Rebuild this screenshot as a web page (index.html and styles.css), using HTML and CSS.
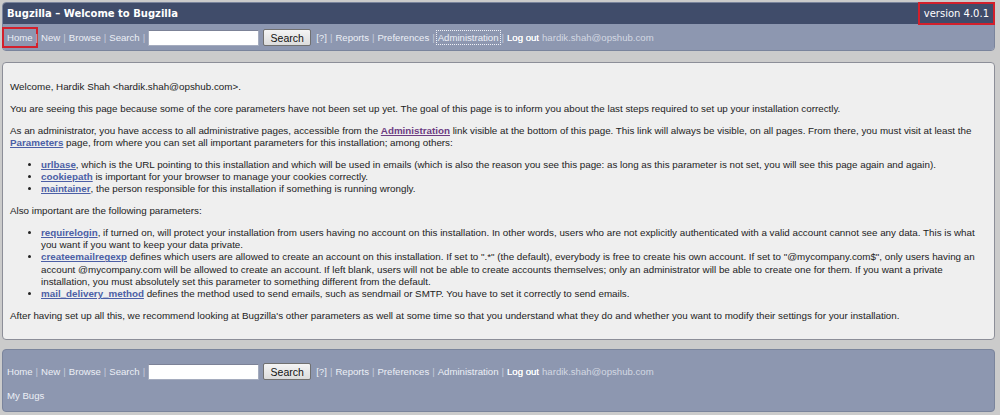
FILE: index.html
```html
<!DOCTYPE html>
<html>
<head>
<meta charset="utf-8">
<title>Bugzilla – Welcome to Bugzilla</title>
<link rel="stylesheet" href="styles.css">
</head>
<body>
<div class="header">
  <div class="titlebar">
    <span class="title">Bugzilla – Welcome to Bugzilla</span>
    <span class="version">version 4.0.1</span>
  </div>
  <div class="navbar">
    <ul class="links">
      <li><a class="lnk marked" href="#">Home</a></li>
      <li class="sep">|</li>
      <li><a class="lnk" href="#">New</a></li>
      <li class="sep">|</li>
      <li><a class="lnk" href="#">Browse</a></li>
      <li class="sep">|</li>
      <li><a class="lnk" href="#">Search</a></li>
      <li class="sep">|</li>
      <li class="form"><input class="quick" type="text"><button class="btn">Search</button></li>
      <li><a class="lnk" href="#">[?]</a></li>
      <li class="sep">|</li>
      <li><a class="lnk" href="#">Reports</a></li>
      <li class="sep">|</li>
      <li><a class="lnk" href="#">Preferences</a></li>
      <li class="sep">|</li>
      <li><a class="lnk focus" href="#">Administration</a></li>
      <li class="sep">|</li>
      <li><a class="lnk logout" href="#">Log out</a></li>
      <li class="email">hardik.shah@opshub.com</li>
    </ul>
  </div>
</div>

<div class="content">
  <p>Welcome, Hardik Shah &lt;hardik.shah@opshub.com&gt;.</p>
  <p>You are seeing this page because some of the core parameters have not been set up yet. The goal of this page is to inform you about the last steps required to set up your installation correctly.</p>
  <p>As an administrator, you have access to all administrative pages, accessible from the <a class="plink visited" href="#">Administration</a> link visible at the bottom of this page. This link will always be visible, on all pages. From there, you must visit at least the <a class="plink" href="#">Parameters</a> page, from where you can set all important parameters for this installation; among others:</p>
  <ul class="params">
    <li><a class="plink" href="#">urlbase</a>, which is the URL pointing to this installation and which will be used in emails (which is also the reason you see this page: as long as this parameter is not set, you will see this page again and again).</li>
    <li><a class="plink" href="#">cookiepath</a> is important for your browser to manage your cookies correctly.</li>
    <li><a class="plink" href="#">maintainer</a>, the person responsible for this installation if something is running wrongly.</li>
  </ul>
  <p>Also important are the following parameters:</p>
  <ul class="params">
    <li><a class="plink" href="#">requirelogin</a>, if turned on, will protect your installation from users having no account on this installation. In other words, users who are not explicitly authenticated with a valid account cannot see any data. This is what you want if you want to keep your data private.</li>
    <li><a class="plink" href="#">createemailregexp</a> defines which users are allowed to create an account on this installation. If set to ".*" (the default), everybody is free to create his own account. If set to "@mycompany.com$", only users having an account @mycompany.com will be allowed to create an account. If left blank, users will not be able to create accounts themselves; only an administrator will be able to create one for them. If you want a private installation, you must absolutely set this parameter to something different from the default.</li>
    <li><a class="plink" href="#">mail_delivery_method</a> defines the method used to send emails, such as sendmail or SMTP. You have to set it correctly to send emails.</li>
  </ul>
  <p>After having set up all this, we recommend looking at Bugzilla's other parameters as well at some time so that you understand what they do and whether you want to modify their settings for your installation.</p>
</div>

<div class="footer">
  <ul class="links">
    <li><a class="lnk" href="#">Home</a></li>
    <li class="sep">|</li>
    <li><a class="lnk" href="#">New</a></li>
    <li class="sep">|</li>
    <li><a class="lnk" href="#">Browse</a></li>
    <li class="sep">|</li>
    <li><a class="lnk" href="#">Search</a></li>
    <li class="sep">|</li>
    <li class="form"><input class="quick" type="text"><button class="btn">Search</button></li>
    <li><a class="lnk" href="#">[?]</a></li>
    <li class="sep">|</li>
    <li><a class="lnk" href="#">Reports</a></li>
    <li class="sep">|</li>
    <li><a class="lnk" href="#">Preferences</a></li>
    <li class="sep">|</li>
    <li><a class="lnk" href="#">Administration</a></li>
    <li class="sep">|</li>
    <li><a class="lnk logout" href="#">Log out</a></li>
    <li class="email">hardik.shah@opshub.com</li>
  </ul>
  <div class="mybugs"><a class="lnk" href="#">My Bugs</a></div>
</div>
</body>
</html>
```
FILE: styles.css
```css
html, body {
  margin: 0;
  padding: 0;
}
body {
  background: #cbcbcb;
  font-family: "Liberation Sans", Arial, sans-serif;
  font-size: 9.6px;
  color: #222;
  padding: 2px 5px 0 2px;
}
.header {
  border-radius: 4px;
  border: 1px solid #7a849c;
}
.titlebar {
  background: #404c6a;
  height: 21px;
  display: flex;
  align-items: center;
  justify-content: space-between;
  padding: 0 5px 0 4px;
  border-radius: 3px 3px 0 0;
}
.title {
  font-family: "DejaVu Sans", Verdana, sans-serif;
  font-weight: bold;
  font-size: 10px;
  color: #ffffff;
}
.version {
  font-family: "DejaVu Sans", Verdana, sans-serif;
  font-size: 10px;
  color: #ffffff;
  outline: 2px solid #d3202c;
  outline-offset: 4px;
}
.navbar {
  background: #8d97b0;
  height: 26px;
  display: flex;
  align-items: center;
  padding-left: 4px;
  padding-top: 1px;
  box-sizing: border-box;
  border-radius: 0 0 3px 3px;
}
.links {
  list-style: none;
  margin: 0;
  padding: 0;
  display: flex;
  align-items: center;
}
.links li {
  margin-right: 3px;
}
.lnk {
  color: #eceff6;
  text-decoration: none;
}
.sep {
  color: #c5cbda;
}
.marked {
  outline: 2px solid #d3202c;
  outline-offset: 3px;
}
.focus {
  outline: 1px dotted #f0f2f8;
  outline-offset: 1px;
}
.logout {
  color: #ffffff;
  text-shadow: 0 0 0.4px #ffffff;
}
.email {
  color: #d3d7e2;
}
.links .form {
  display: flex;
  align-items: center;
  margin-right: 5px;
}
.quick {
  width: 107px;
  height: 12px;
  border: 1px solid #a5acbe;
  border-top-color: #7c8297;
  background: #fff;
  padding: 1px;
  margin: 0 4px 0 0;
}
.btn {
  width: 48px;
  height: 17px;
  padding: 0;
  font-family: "Liberation Sans", Arial, sans-serif;
  font-size: 10.5px;
  color: #111;
  border: 1px solid #707070;
  border-radius: 2px;
  background: linear-gradient(#f4f4f4, #dcdcdc);
}
.content {
  margin-top: 11px;
  background: #efefef;
  border: 1px solid #8c8e98;
  border-radius: 4px;
  padding: 18px 7px 7px 7px;
  height: 251px;
  font-size: 9.8px;
  line-height: 12.3px;
}
.content p {
  margin: 0 0 9.5px 0;
}
.params {
  margin: 0 0 9.5px 0;
  padding-left: 31px;
}
.plink {
  color: #4c5fa6;
  font-weight: bold;
  text-decoration: underline;
}
.visited {
  color: #6c3c82;
}
.footer {
  margin-top: 9px;
  background: #8d97b0;
  border: 1px solid #7a849c;
  border-radius: 4px;
  height: 61px;
  padding: 0 4px;
}
.footer .links {
  margin-top: 13px;
}
.mybugs {
  margin-top: 10px;
}
```
